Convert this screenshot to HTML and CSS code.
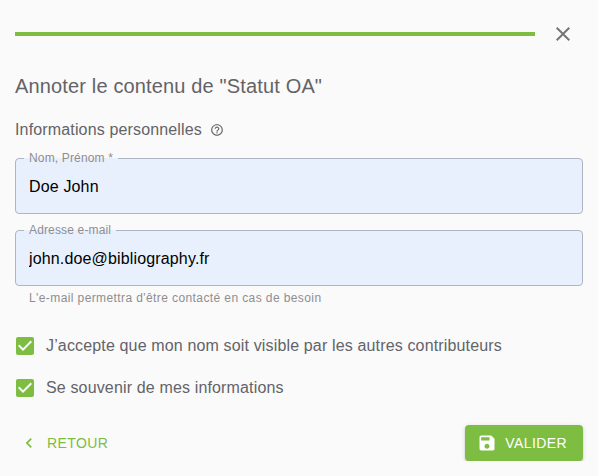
FILE: index.html
```html
<!DOCTYPE html>
<html lang="fr">
<head>
    <meta charset="UTF-8">
    <meta name="viewport" content="width=device-width, initial-scale=1.0">
    <title>Annoter le contenu</title>
    <link rel="stylesheet" href="styles.css">
</head>
<body>

<form class="annotation">
    <div class="header">
        <div class="progress"></div>
        <button type="button" class="close" aria-label="Fermer">
            <svg class="icon" viewBox="0 0 24 24"><path d="M19 6.41 17.59 5 12 10.59 6.41 5 5 6.41 10.59 12 5 17.59 6.41 19 12 13.41 17.59 19 19 17.59 13.41 12z"/></svg>
        </button>
    </div>

    <h1 class="title">Annoter le contenu de "Statut OA"</h1>

    <div class="section-title">
        <span>Informations personnelles</span>
        <svg class="icon-help" viewBox="0 0 24 24"><path d="M11 18h2v-2h-2v2zm1-16C6.48 2 2 6.48 2 12s4.48 10 10 10 10-4.48 10-10S17.52 2 12 2zm0 18c-4.41 0-8-3.59-8-8s3.59-8 8-8 8 3.59 8 8-3.59 8-8 8zm0-14c-2.21 0-4 1.79-4 4h2c0-1.1.9-2 2-2s2 .9 2 2c0 2-3 1.75-3 5h2c0-2.25 3-2.5 3-5 0-2.21-1.79-4-4-4z"/></svg>
    </div>

    <div class="field">
        <label class="field-label" for="name">Nom, Prénom *</label>
        <input class="field-input" type="text" id="name" value="Doe John">
    </div>

    <div class="field">
        <label class="field-label" for="email">Adresse e-mail</label>
        <input class="field-input" type="text" id="email" value="john.doe@bibliography.fr">
    </div>
    <p class="helper">L'e-mail permettra d'être contacté en cas de besoin</p>

    <div class="options">
        <label class="option">
            <svg class="icon icon-check" viewBox="0 0 24 24"><path d="M19 3H5c-1.11 0-2 .9-2 2v14c0 1.1.89 2 2 2h14c1.11 0 2-.9 2-2V5c0-1.1-.89-2-2-2zm-9 14l-5-5 1.41-1.41L10 14.17l7.59-7.59L19 8l-9 9z"/></svg>
            <span>J’accepte que mon nom soit visible par les autres contributeurs</span>
        </label>
        <label class="option">
            <svg class="icon icon-check" viewBox="0 0 24 24"><path d="M19 3H5c-1.11 0-2 .9-2 2v14c0 1.1.89 2 2 2h14c1.11 0 2-.9 2-2V5c0-1.1-.89-2-2-2zm-9 14l-5-5 1.41-1.41L10 14.17l7.59-7.59L19 8l-9 9z"/></svg>
            <span>Se souvenir de mes informations</span>
        </label>
    </div>

    <div class="actions">
        <button type="button" class="btn btn-text">
            <svg class="btn-icon" viewBox="0 0 24 24"><path d="M15.41 7.41 14 6l-6 6 6 6 1.41-1.41L10.83 12z"/></svg>
            Retour
        </button>
        <button type="button" class="btn btn-primary">
            <svg class="btn-icon" viewBox="0 0 24 24"><path d="M17 3H5c-1.11 0-2 .9-2 2v14c0 1.1.89 2 2 2h14c1.1 0 2-.9 2-2V7l-4-4zm-5 16c-1.66 0-3-1.34-3-3s1.34-3 3-3 3 1.34 3 3-1.34 3-3 3zm3-10H5V5h10v4z"/></svg>
            Valider
        </button>
    </div>
</form>

</body>
</html>
```
FILE: styles.css
```css
* {
    box-sizing: border-box;
}
body {
    margin: 0;
    background-color: #fafafa;
    color: #636368;
    font-family: "Liberation Sans", Arial, sans-serif;
    font-size: 16px;
    line-height: 24px;
    letter-spacing: 0.15px;
}
.annotation {
    padding: 14px 15px 0;
}
.header {
    display: flex;
    align-items: center;
    gap: 8px;
}
.progress {
    flex: 1;
    height: 4px;
    background-color: #7dbd42;
}
.close {
    display: flex;
    padding: 8px;
    border: 0;
    background: none;
    color: #757575;
}
.icon {
    width: 24px;
    height: 24px;
    fill: currentColor;
}
.title {
    margin: 16px 0 0;
    font-size: 20px;
    font-weight: 400;
    line-height: 32px;
    letter-spacing: 0.15px;
}
.section-title {
    display: flex;
    align-items: center;
    gap: 8px;
    margin: 16px 0;
}
.icon-help {
    width: 14px;
    height: 14px;
    fill: currentColor;
}
.field {
    position: relative;
    margin-bottom: 16px;
}
.field-label {
    position: absolute;
    top: 0;
    left: 9px;
    height: 1px;
    padding: 0 5px;
    background-color: #e8f0fe;
    color: #8e8e91;
    font-size: 12px;
    line-height: 0;
    letter-spacing: 0.15px;
}
.field-input {
    display: block;
    width: 100%;
    height: 56px;
    padding: 2px 13px 0;
    border: 1px solid #adb4c3;
    border-radius: 4px;
    outline: 0;
    background-color: #e8f0fe;
    color: #000;
    font: inherit;
    letter-spacing: inherit;
}
.helper {
    margin: -14px 14px 0;
    color: #8e8e91;
    font-size: 12px;
    line-height: 20px;
    letter-spacing: 0.4px;
}
.options {
    margin-top: 17px;
}
.option {
    display: flex;
    align-items: center;
    gap: 9px;
    height: 42px;
    margin-left: -2px;
}
.icon-check {
    color: #7dbd42;
}
.actions {
    display: flex;
    justify-content: space-between;
    margin-top: 16px;
}
.btn {
    display: flex;
    align-items: center;
    gap: 8px;
    height: 36px;
    border: 0;
    border-radius: 4px;
    font-family: inherit;
    font-size: 14px;
    letter-spacing: 0.4px;
    text-transform: uppercase;
}
.btn-text {
    padding: 0 8px 0 4px;
    background: none;
    color: #7dbd42;
}
.btn-primary {
    padding: 0 16px 0 12px;
    background-color: #7dbd42;
    color: #fff;
    box-shadow: 0 3px 1px -2px rgba(0, 0, 0, 0.2), 0 2px 2px 0 rgba(0, 0, 0, 0.14), 0 1px 5px 0 rgba(0, 0, 0, 0.12);
}
.btn-icon {
    width: 20px;
    height: 20px;
    fill: currentColor;
}
```
